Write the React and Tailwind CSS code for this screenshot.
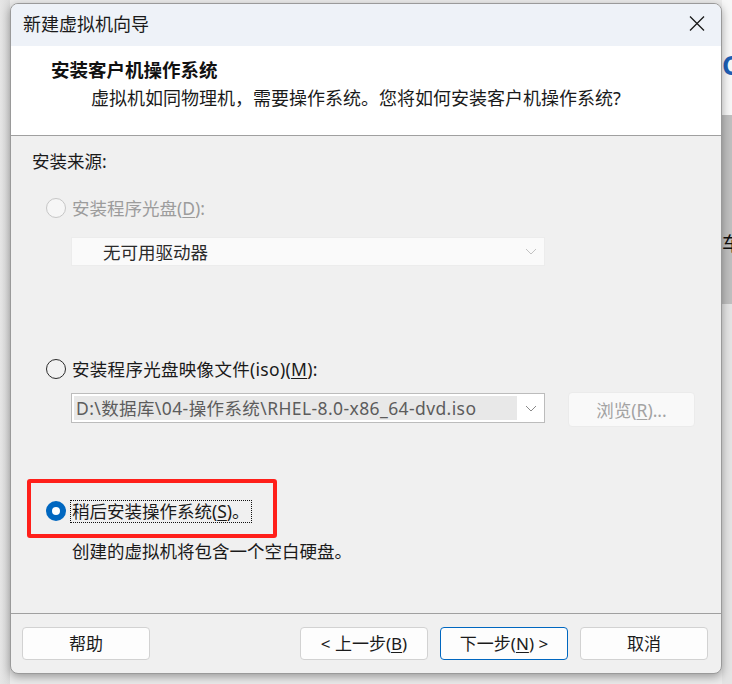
import React from 'react'

const font = "font-['Noto_Sans','Noto_Sans_CJK_SC',sans-serif]"

const Radio = ({ state }) => {
  if (state === 'checked') {
    return (
      <span className="flex h-[20px] w-[20px] shrink-0 items-center justify-center rounded-full bg-[#0067c0]">
        <span className="h-[8px] w-[8px] rounded-full bg-white" />
      </span>
    )
  }
  if (state === 'disabled') {
    return <span className="h-[20px] w-[20px] shrink-0 rounded-full border border-[#c6c6c6] bg-[#f6f6f6]" />
  }
  return <span className="h-[20px] w-[20px] shrink-0 rounded-full border-[1.5px] border-[#2b2b2b] bg-[#f2f2f2]" />
}

const Chevron = ({ color }) => (
  <svg width="12" height="7" viewBox="0 0 12 7" fill="none">
    <polyline points="1,1 6,6 11,1" stroke={color} strokeWidth="1" />
  </svg>
)

const Btn = ({ children, primary }) => (
  <button
    className={`flex h-[33px] w-[128px] items-center justify-center rounded-[4px] border bg-[#fdfdfd] text-[17px] leading-none text-[#1b1b1b] ${
      primary ? 'border-[#0067c0]' : 'border-[#d2d2d2]'
    }`}
  >
    {children}
  </button>
)

export default function App() {
  return (
    <div className={`flex h-[684px] w-[732px] overflow-hidden bg-[#ececec] ${font}`}>
      {/* left edge of desktop */}
      <div className="w-[10px] shrink-0 bg-gradient-to-r from-[#e6e6e6] to-[#dcdcdc]" />

      {/* wizard window */}
      <div className="relative z-10 mt-[3px] flex h-[671px] w-[712px] shrink-0 flex-col overflow-hidden rounded-[8px] border border-[#9a9a9a] bg-[#f0f0f0] shadow-[0_3px_10px_rgba(0,0,0,0.35)]">
        {/* title bar */}
        <div className="flex h-[42px] shrink-0 items-center justify-between bg-[#eef2f8] pb-[3px] pl-[12px] pr-[16px]">
          <span className="text-[18px] leading-none text-[#1a1a1a]">新建虚拟机向导</span>
          <svg width="16" height="15" viewBox="0 0 16 15" fill="none">
            <path d="M1 0.5 L15 14.5 M15 0.5 L1 14.5" stroke="#1a1a1a" strokeWidth="1.3" />
          </svg>
        </div>

        {/* header */}
        <div className="flex h-[90px] shrink-0 flex-col border-b border-[#a0a0a0] bg-white">
          <div className="mt-[14px] pl-[40px] text-[18.5px] font-bold leading-[20px] text-[#111]">安装客户机操作系统</div>
          <div className="mt-[8px] pl-[80px] text-[18px] leading-[20px] text-[#1a1a1a]">
            虚拟机如同物理机，需要操作系统。您将如何安装客户机操作系统?
          </div>
        </div>

        {/* body */}
        <div className="flex h-[478px] shrink-0 flex-col border-b border-[#a0a0a0] text-[17.5px] leading-[20px]">
          <div className="mt-[15px] pl-[21px] text-[#1a1a1a]">安装来源:</div>

          <div className="mt-[27px] flex h-[20px] items-center gap-[6px] pl-[35px] text-[#9c9c9c]">
            <Radio state="disabled" />
            <span>
              安装程序光盘(<span className="underline underline-offset-2">D</span>):
            </span>
          </div>

          <div className="ml-[60px] mt-[19px] flex h-[29px] w-[474px] items-center justify-between border border-[#ececec] bg-[#fafafa] pl-[31px] pr-[7px] text-[#2a2a2a]">
            <span>无可用驱动器</span>
            <Chevron color="#c2c2c2" />
          </div>

          <div className="mt-[93px] flex h-[20px] items-center gap-[6px] pl-[35px] text-[#1a1a1a]">
            <Radio />
            <span className="tracking-[0.3px]">
              安装程序光盘映像文件(iso)(<span className="underline underline-offset-2">M</span>):
            </span>
          </div>

          <div className="mt-[13px] flex items-start pl-[60px]">
            <div className="mt-[1px] flex h-[30px] w-[474px] items-center justify-between border border-[#bcbcbc] bg-white p-[2px] pr-[7px]">
              <div className="flex h-full w-[443px] items-center bg-[#e8e8e8] pl-[2px] text-[17.5px] tracking-[0.4px] text-[#5c5c5c]">
                D:\数据库\04-操作系统\RHEL-8.0-x86_64-dvd.iso
              </div>
              <Chevron color="#8a8a8a" />
            </div>
            <button className="ml-[23px] flex h-[35px] w-[127px] items-center justify-center rounded-[4px] border border-[#ebebeb] bg-[#f9f9f9] text-[#a3a3a3]">
              浏览(<span className="underline underline-offset-2">R</span>)...
            </button>
          </div>

          <div className="relative mt-[73px] flex h-[22px] items-center gap-[4px] pl-[35px] text-[#1a1a1a]">
            <Radio state="checked" />
            <span className="flex h-[23px] items-center border border-dotted border-[#111] px-[1px]">
              稍后安装操作系统(<span className="underline underline-offset-2">S</span>)。
            </span>
            {/* red annotation frame */}
            <div className="absolute left-[16px] top-[-21px] h-[59px] w-[250px] rounded-[3px] border-[4px] border-[#ff1f1a]" />
          </div>

          <div className="mt-[19px] pl-[61px] text-[#1a1a1a]">创建的虚拟机将包含一个空白硬盘。</div>
        </div>

        {/* footer */}
        <div className="flex flex-1 items-start justify-between pl-[11px] pr-[13px] pt-[13px]">
          <Btn>帮助</Btn>
          <div className="flex gap-[12px]">
            <Btn>
              &lt; 上一步(<span className="underline underline-offset-2">B</span>)
            </Btn>
            <Btn primary>
              下一步(<span className="underline underline-offset-2">N</span>) &gt;
            </Btn>
            <Btn>取消</Btn>
          </div>
        </div>
      </div>

      {/* right edge of the app behind */}
      <div className="flex w-[10px] shrink-0 flex-col overflow-hidden">
        <div className="h-[115px] shrink-0 overflow-hidden bg-[#f7f7f7] pt-[52px]">
          <span className="block text-[26px] font-bold leading-none text-[#1d5fb5]">C</span>
        </div>
        <div className="h-[189px] shrink-0 overflow-hidden bg-[#bfbfbf] pt-[120px]">
          <span className="block text-[19px] leading-none text-[#111]">车</span>
        </div>
        <div className="flex-1 bg-[#e4e4e4]" />
      </div>
    </div>
  )
}
